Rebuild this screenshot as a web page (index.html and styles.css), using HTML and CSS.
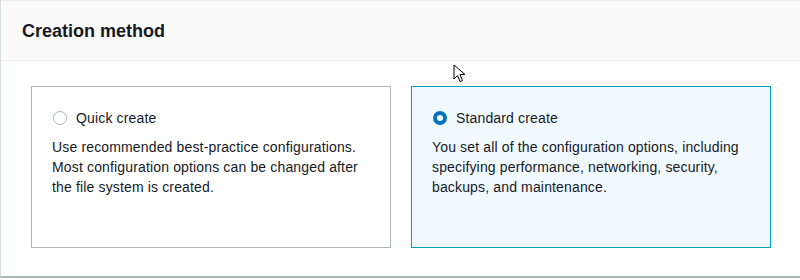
FILE: index.html
```html
<!DOCTYPE html>
<html lang="en">
<head>
  <meta charset="UTF-8" />
  <title>Creation method</title>
  <link rel="stylesheet" href="styles.css">
</head>
<body>
  <section class="panel">
    <header class="panel-header">
      <h2>Creation method</h2>
    </header>

    <div class="panel-body">
      <label class="tile">
        <span class="tile-head">
          <span class="radio"></span>
          <span class="tile-label">Quick create</span>
        </span>
        <span class="tile-desc">Use recommended best-practice configurations. Most configuration options can be changed after the file system is created.</span>
      </label>

      <label class="tile selected">
        <span class="tile-head">
          <span class="radio"></span>
          <span class="tile-label">Standard create</span>
        </span>
        <span class="tile-desc">You set all of the configuration options, including specifying performance, networking, security, backups, and maintenance.</span>
      </label>
    </div>

    <!-- mouse pointer in the shot -->
    <svg class="cursor" width="14" height="20" viewBox="0 0 14 20">
      <path d="M1 1 L1 15 L4.5 11.5 L7 17.5 L9.5 16.5 L7 10.5 L12 10.5 Z" fill="#fff" stroke="#000" stroke-width="1" stroke-linejoin="round"/>
    </svg>
  </section>
</body>
</html>
```

FILE: styles.css
```css
html, body {
  margin: 0;
  padding: 0;
  background: white;
  font-family: "Liberation Sans", Arial, sans-serif;
  color: #16191f;
}

.panel {
  position: relative;
  width: 800px;
  height: 278px;
  box-sizing: border-box;
  border-top: 1px solid #eaeded;
  border-left: 1px solid #d5dbdb;
  border-bottom: 2px solid #aab7b8;
  background: white;
}

.panel-header {
  height: 59px;
  background: #fafafa;
  border-bottom: 1px solid #eaeded;
  display: flex;
  align-items: center;
  padding: 0 21px;
}

.panel-header h2 {
  margin: 0;
  font-size: 18px;
  font-weight: bold;
  margin-top: 2px;
}

.panel-body {
  display: grid;
  grid-template-columns: 360px 360px;
  gap: 20px;
  padding: 25px 29px 0 30px;
}

.tile {
  display: flex;
  flex-direction: column;
  height: 162px;
  box-sizing: border-box;
  border: 1px solid #aab7b8;
  padding: 20px 20px 0 20px;
  cursor: pointer;
}

.tile.selected {
  border-color: #00a1c9;
  background: #f1faff;
}

.tile-head {
  display: flex;
  align-items: center;
  height: 22px;
}

.radio {
  width: 14px;
  height: 14px;
  box-sizing: border-box;
  border: 1px solid #aab7b8;
  border-radius: 50%;
  background: white;
  margin-left: 1px;
  margin-right: 9px;
}

.selected .radio {
  border: 4px solid #0073bb;
}

.tile-label {
  font-size: 14px;
  letter-spacing: 0.15px;
}

.tile-desc {
  font-size: 14px;
  line-height: 20px;
  letter-spacing: 0.15px;
  margin-top: 8px;
}

.cursor {
  position: absolute;
  left: 452px;
  top: 63px;
}
```
